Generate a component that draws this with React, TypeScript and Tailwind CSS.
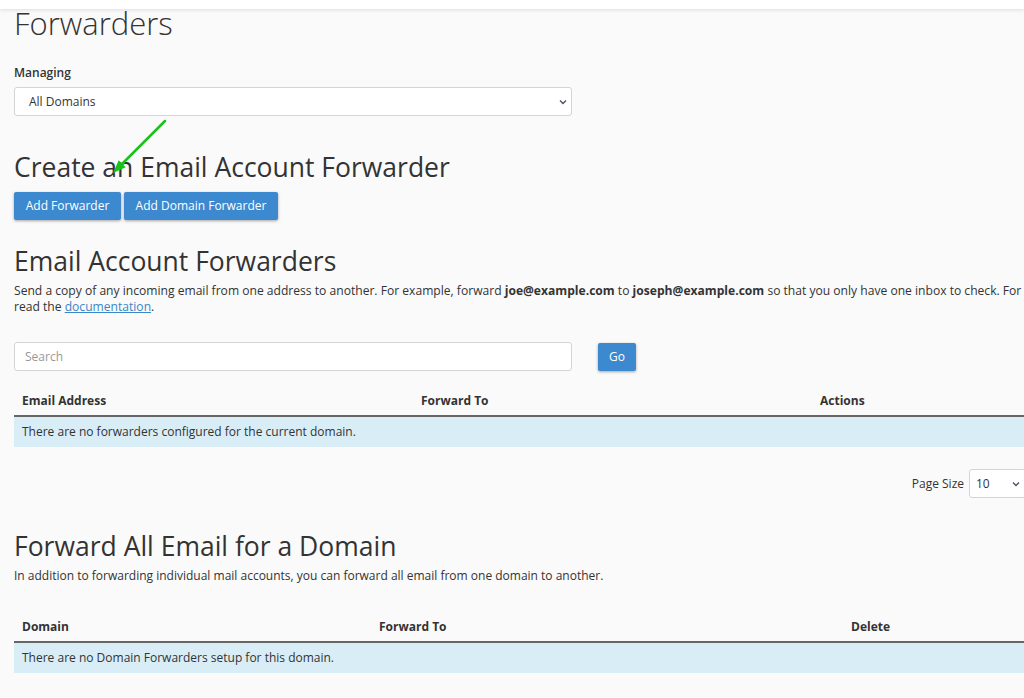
import React from "react";

const Chevron = () => (
  <svg width="10" height="10" viewBox="0 0 10 10" className="text-gray-600">
    <path d="M2 3.5 L5 6.5 L8 3.5" fill="none" stroke="currentColor" strokeWidth="1.4" />
  </svg>
);

function SelectBox({ value, className }: { value: string; className: string }) {
  return (
    <div className={`flex items-center justify-between bg-white border border-[#d4d4d4] rounded-[3px] text-[12px] text-[#333] ${className}`}>
      <span>{value}</span>
      <Chevron />
    </div>
  );
}

function Button({ children, className = "" }: { children: React.ReactNode; className?: string }) {
  return (
    <button className={`h-[28px] bg-[#3c89cf] text-white text-[12px] rounded-[2px] shadow-[0_1px_3px_rgba(0,0,0,0.35)] ${className}`}>
      {children}
    </button>
  );
}

function EmptyTable({ cols, widths, message }: { cols: string[]; widths: string[]; message: string }) {
  return (
    <div className="w-full">
      <div className="flex h-[30px] items-center border-b-2 border-[#666] text-[12px] font-bold text-[#333]">
        {cols.map((c, i) => (
          <div key={c} className={`px-2 ${widths[i]}`}>
            {c}
          </div>
        ))}
      </div>
      <div className="h-[30px] flex items-center px-2 bg-[#d9edf7] text-[12px] text-[#333]">{message}</div>
    </div>
  );
}

export default function App() {
  return (
    <div className="w-[1024px] h-[698px] overflow-hidden bg-[#fafafa] text-[#333]" style={{ fontFamily: "'Open Sans', 'Liberation Sans', sans-serif" }}>
      <div className="h-[9px] bg-white shadow-[0_1px_4px_rgba(0,0,0,0.12)]" />
      <div className="w-[1012px] ml-[14px] relative">
        <h1 className="text-[31px] font-light leading-[36px] -mt-[4px]">Forwarders</h1>

        <div className="mt-[23px] text-[12px] font-semibold leading-[18px]">Managing</div>
        <SelectBox value="All Domains" className="mt-[5px] w-[558px] h-[29px] pl-[14px] pr-[3px]" />

        {/* green pointer arrow */}
        <svg className="absolute left-[90px] top-[110px]" width="70" height="65" viewBox="0 0 70 65">
          <line x1="61" y1="6" x2="16" y2="51" stroke="#19c219" strokeWidth="2.5" strokeLinecap="round" />
          <path d="M9 58 L21.7 52.3 L14.7 45.3 Z" fill="#19c219" />
        </svg>

        <h2 className="mt-[34px] text-[26.5px] leading-[34px]">Create an Email Account Forwarder</h2>
        <div className="mt-[8px] flex gap-[3px]">
          <Button className="w-[107px]">Add Forwarder</Button>
          <Button className="w-[154px]">Add Domain Forwarder</Button>
        </div>

        <h2 className="mt-[24px] text-[26.5px] leading-[34px]">Email Account Forwarders</h2>
        <p className="w-[1125px] text-[12.1px] leading-[16px] mt-[5px]">
          Send a copy of any incoming email from one address to another. For example, forward <b>joe@example.com</b> to{" "}
          <b>joseph@example.com</b> so that you only have one inbox to check. For more information, read the{" "}
          <a className="text-[#3a86c8] underline">documentation</a>.
        </p>

        <div className="mt-[27px] flex items-center">
          <div className="w-[558px] h-[29px] bg-white border border-[#d4d4d4] rounded-[3px] pl-[10px] flex items-center text-[12px] text-[#999]">
            Search
          </div>
          <Button className="ml-[26px] w-[38px]">Go</Button>
        </div>

        <div className="mt-[16px]">
          <EmptyTable
            cols={["Email Address", "Forward To", "Actions"]}
            widths={["w-[399px]", "w-[399px]", "flex-1"]}
            message="There are no forwarders configured for the current domain."
          />
        </div>

        <div className="mt-[22px] flex items-center justify-end gap-[5px] text-[12px]">
          <span>Page Size</span>
          <SelectBox value="10" className="w-[57px] h-[29px] pl-[6px] pr-[4px]" />
        </div>

        <h2 className="mt-[31px] text-[26.5px] leading-[34px]">Forward All Email for a Domain</h2>
        <p className="text-[12px] leading-[16px] mt-[5px]">
          In addition to forwarding individual mail accounts, you can forward all email from one domain to another.
        </p>

        <div className="mt-[29px]">
          <EmptyTable
            cols={["Domain", "Forward To", "Delete"]}
            widths={["w-[357px]", "w-[472px]", "flex-1"]}
            message="There are no Domain Forwarders setup for this domain."
          />
        </div>
      </div>
    </div>
  );
}
